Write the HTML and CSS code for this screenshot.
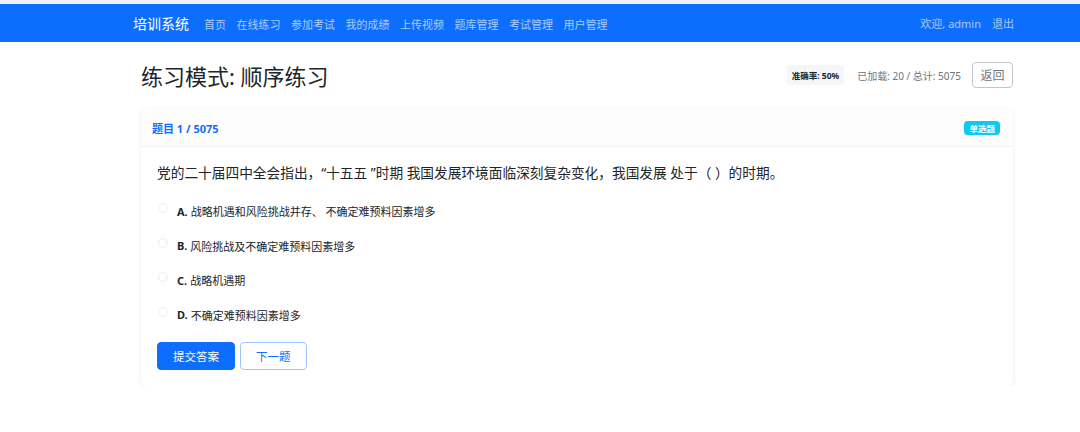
FILE: index.html
```html
<!DOCTYPE html>
<html lang="zh-CN">
<head>
  <meta charset="UTF-8">
  <meta name="viewport" content="width=device-width, initial-scale=1.0">
  <title>练习模式 - 培训系统</title>
  <link rel="stylesheet" href="styles.css">
</head>
<body>
  <div class="topline"></div>
  <nav class="navbar">
    <div class="nav-inner">
      <a class="brand" href="#">培训系统</a>
      <ul class="nav-links">
        <li><a href="#">首页</a></li>
        <li><a href="#">在线练习</a></li>
        <li><a href="#">参加考试</a></li>
        <li><a href="#">我的成绩</a></li>
        <li><a href="#">上传视频</a></li>
        <li><a href="#">题库管理</a></li>
        <li><a href="#">考试管理</a></li>
        <li><a href="#">用户管理</a></li>
      </ul>
      <div class="nav-user">
        <span>欢迎, admin</span>
        <a href="#">退出</a>
      </div>
    </div>
  </nav>

  <main class="main">
    <div class="page-head">
      <h1>练习模式: 顺序练习</h1>
      <div class="head-tools">
        <span class="rate">准确率: 50%</span>
        <span class="loaded">已加载: 20 / 总计: 5075</span>
        <button class="btn-back">返回</button>
      </div>
    </div>

    <div class="card">
      <div class="card-header">
        <span class="q-index">题目 1 / 5075</span>
        <span class="q-type">单选题</span>
      </div>
      <div class="card-body">
        <p class="q-text">党的二十届四中全会指出，“十五五 ”时期 我国发展环境面临深刻复杂变化，我国发展 处于（ ）的时期。</p>
        <label class="option"><input type="radio" name="answer" value="A"><b>A.</b> 战略机遇和风险挑战并存、 不确定难预料因素增多</label>
        <label class="option"><input type="radio" name="answer" value="B"><b>B.</b> 风险挑战及不确定难预料因素增多</label>
        <label class="option"><input type="radio" name="answer" value="C"><b>C.</b> 战略机遇期</label>
        <label class="option"><input type="radio" name="answer" value="D"><b>D.</b> 不确定难预料因素增多</label>
        <div class="actions">
          <button class="btn btn-primary">提交答案</button>
          <button class="btn btn-outline">下一题</button>
        </div>
      </div>
    </div>
  </main>
</body>
</html>
```

FILE: styles.css
```css
body {
  margin: 0;
  background-color: #fff;
  color: #212529;
  font-family: "Segoe UI", "Noto Sans", "Noto Sans CJK SC", sans-serif;
}

a {
  text-decoration: none;
}

.topline {
  height: 4px;
  background-color: #eef0f3;
}

/* navbar */
.navbar {
  height: 38px;
  background-color: #0d6efd;
}
.nav-inner {
  margin-left: 133px;
  width: 881px;
  height: 100%;
  display: flex;
  align-items: center;
}
.brand {
  color: #fff;
  font-size: 14px;
  margin-right: 15px;
}
.nav-links {
  display: flex;
  gap: 10.5px;
  list-style: none;
  margin: 0;
  padding: 0;
}
.nav-links a,
.nav-user span,
.nav-user a {
  color: #a9cbfe;
  font-size: 11px;
}
.nav-user {
  margin-left: auto;
  display: flex;
  gap: 11px;
}

/* page */
.main {
  margin-left: 141px;
  width: 872px;
}
.page-head {
  display: flex;
  align-items: center;
  justify-content: space-between;
  height: 64px;
  margin-top: 1px;
}
.page-head h1 {
  margin: 0;
  font-size: 22px;
  font-weight: 400;
}
.head-tools {
  display: flex;
  align-items: center;
}
.rate {
  background-color: #f5f6f8;
  border-radius: 3px;
  padding: 4px 5px;
  font-size: 8.5px;
  font-weight: 700;
  margin-right: 13px;
}
.loaded {
  color: #6c757d;
  font-size: 10px;
  margin-right: 11px;
}
.btn-back {
  width: 41px;
  height: 26px;
  padding: 0;
  border: 1px solid #c2c6ca;
  border-radius: 4px;
  background-color: #fff;
  color: #6c757d;
  font-family: inherit;
  font-size: 12px;
}

/* question card */
.card {
  margin-top: 2px;
  background-color: #fff;
  border-radius: 6px;
  box-shadow: 0 1px 5px rgba(0, 0, 0, 0.07);
}
.card-header {
  display: flex;
  align-items: center;
  justify-content: space-between;
  height: 37px;
  padding: 0 13px 0 11px;
  background-color: #fdfdfe;
  border-bottom: 1px solid #f1f2f4;
  border-radius: 6px 6px 0 0;
}
.q-index {
  color: #0d6efd;
  font-size: 11px;
  font-weight: 700;
}
.q-type {
  background-color: #0dcaf0;
  color: #fff;
  font-size: 8.5px;
  font-weight: 700;
  padding: 1px 5px;
  border-radius: 4px;
}
.card-body {
  padding: 16px 16px 16px 16px;
}
.q-text {
  margin: 0 0 11px;
  font-size: 13.7px;
  line-height: 20px;
}
.option {
  display: flex;
  align-items: center;
  height: 34.5px;
  font-size: 11px;
  color: #212529;
}
.option input {
  appearance: none;
  width: 10px;
  height: 10px;
  margin: -6px 9px 0 1px;
  border: 1px solid #eceef0;
  border-radius: 50%;
  background-color: #fff;
}
.option b {
  margin-right: 3px;
}
.actions {
  display: flex;
  gap: 5px;
  margin-top: 10px;
}
.btn {
  height: 28px;
  padding: 0 15px;
  border-radius: 4px;
  font-family: inherit;
  font-size: 11.5px;
}
.btn-primary {
  background-color: #0d6efd;
  border: 1px solid #0d6efd;
  color: #fff;
}
.btn-outline {
  background-color: #fff;
  border: 1px solid #9ec5fe;
  color: #0d6efd;
}
```
